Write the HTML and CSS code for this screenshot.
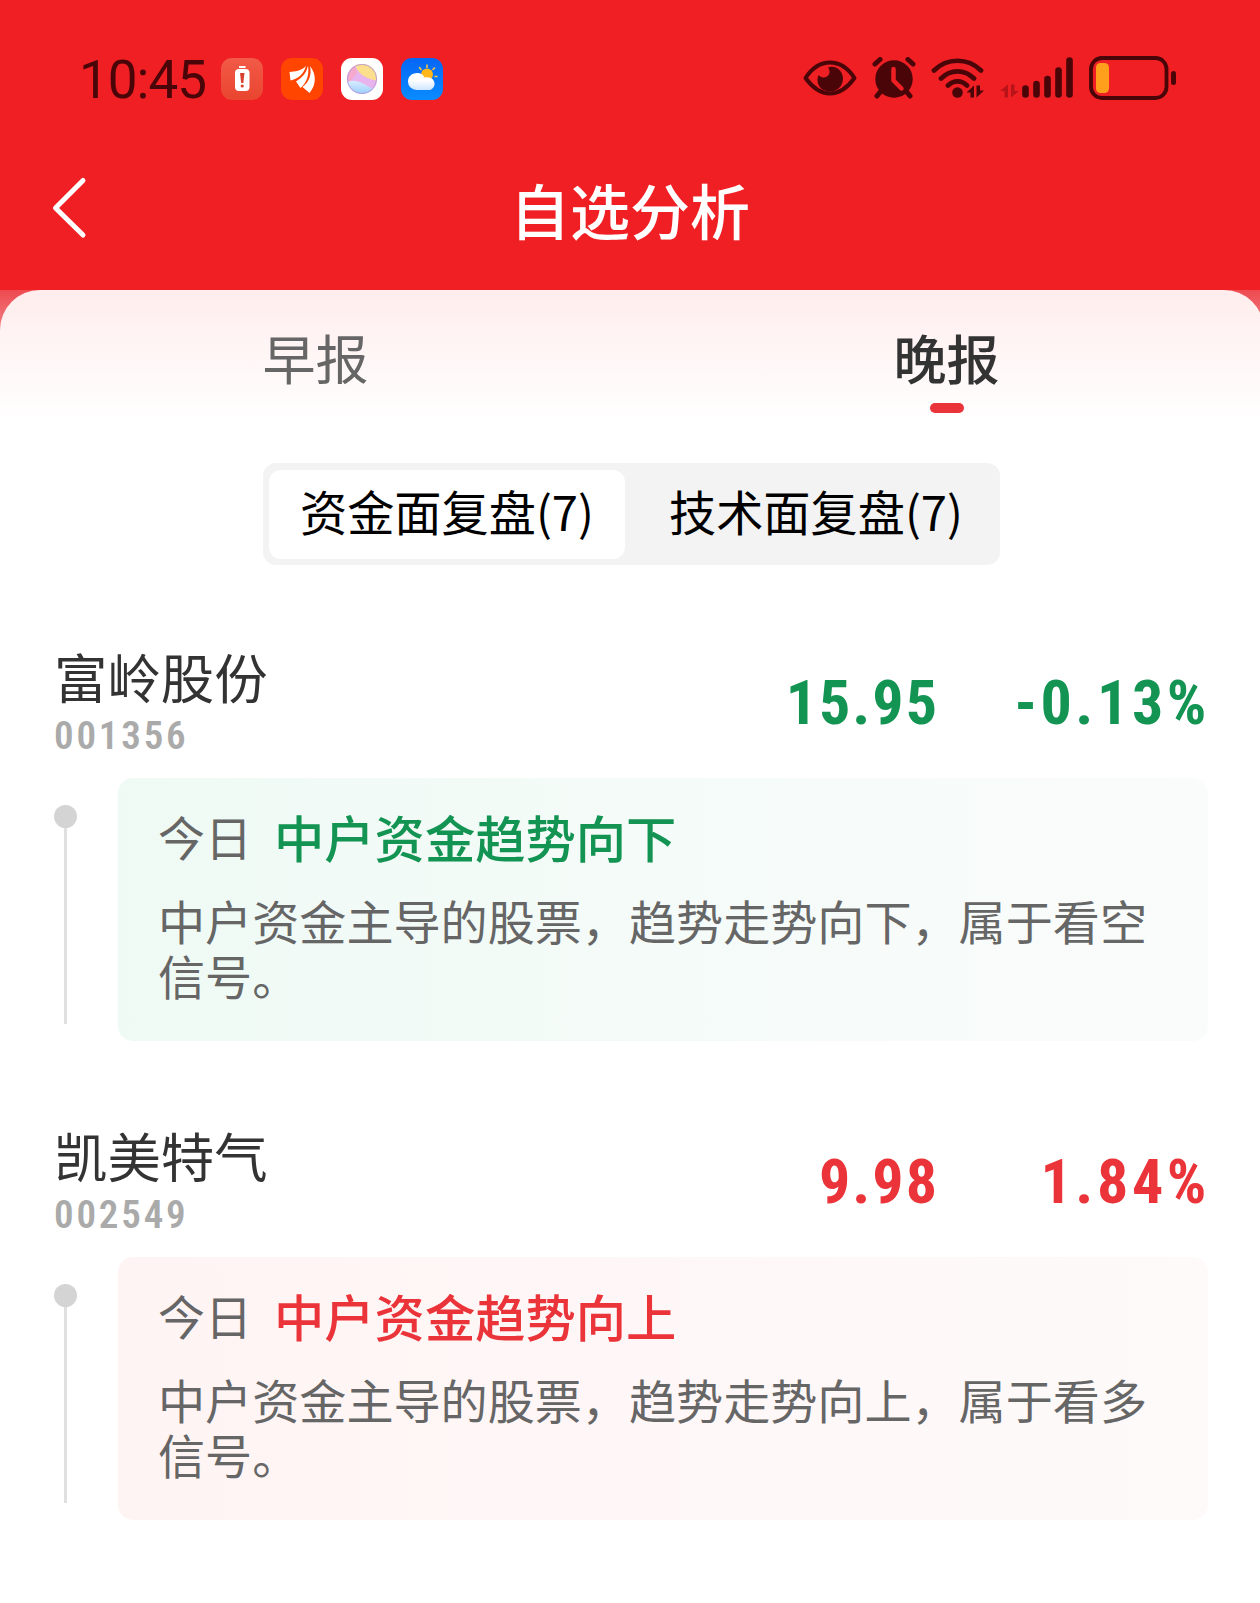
FILE: index.html
```html
<!DOCTYPE html>
<html lang="zh-CN">
<head>
    <meta charset="UTF-8">
    <meta name="viewport" content="width=device-width, initial-scale=1.0">
    <title>自选分析</title>
    <link rel="stylesheet" href="styles.css">
</head>
<body>
    <div class="screen">
        <header class="header">
            <div class="status-bar">
                <span class="time">10:45</span>
                <div class="app-icons">
                    <svg width="42" height="42" viewBox="0 0 42 42">
                        <defs>
                            <linearGradient id="alert" x1="0" y1="0" x2="0" y2="1">
                                <stop offset="0" stop-color="#f25a48"/>
                                <stop offset="1" stop-color="#e9452f"/>
                            </linearGradient>
                        </defs>
                        <rect width="42" height="42" rx="11" fill="url(#alert)"/>
                        <rect x="18" y="8" width="6.500" height="2" fill="#fff"/>
                        <rect x="14" y="11" width="14.500" height="22" rx="4" fill="#fff"/>
                        <path d="M19 15h4.500l-1.200 10h-2.100z" fill="#d8402f"/>
                        <circle cx="21.200" cy="28" r="1.600" fill="#d8402f"/>
                    </svg>
                    <svg width="42" height="42" viewBox="0 0 42 42">
                        <rect width="42" height="42" rx="11" fill="#ff4500"/>
                        <path d="M25 8C20 13 14 13.500 8.500 14l1 8.500c7-1.500 13-6 15.500-14.500z" fill="#fff"/>
                        <path d="M27 7.500c-1.500 8-6 12-12 16l4.500 6.500c6-5 9-13 7.500-22.500z" fill="#fff"/>
                        <path d="M29 8c2 9-1 16-7.500 21l7 6c7-8 7-19 .5-27z" fill="#fff"/>
                    </svg>
                    <svg width="42" height="42" viewBox="0 0 42 42">
                        <defs>
                            <clipPath id="ball"><circle cx="21" cy="21" r="15"/></clipPath>
                            <linearGradient id="ballBlue" x1="0" y1="0" x2="0" y2="1">
                                <stop offset="0" stop-color="#d9ecff"/>
                                <stop offset="1" stop-color="#8cc8f8"/>
                            </linearGradient>
                        </defs>
                        <rect width="42" height="42" rx="11" fill="#fff"/>
                        <g clip-path="url(#ball)">
                            <rect width="42" height="42" fill="#e8b4ee"/>
                            <path d="M14 6c2 9 10 15 24 17V4z" fill="#fbdf8c"/>
                            <path d="M4 8h10l2 7-9 11z" fill="#f5a9cc"/>
                            <path d="M5 24c10-4 18 2 27 7l-8 8H5z" fill="url(#ballBlue)"/>
                        </g>
                        <circle cx="21" cy="21" r="14.600" fill="none" stroke="#b394d8" stroke-width="0.800"/>
                    </svg>
                    <svg width="42" height="42" viewBox="0 0 42 42">
                        <defs>
                            <linearGradient id="sky" x1="0" y1="0" x2="0" y2="1">
                                <stop offset="0" stop-color="#0566f5"/>
                                <stop offset="1" stop-color="#0a8cff"/>
                            </linearGradient>
                            <linearGradient id="cloud" x1="0" y1="0" x2="0" y2="1">
                                <stop offset="0.400" stop-color="#fff"/>
                                <stop offset="1" stop-color="#cfe6ff"/>
                            </linearGradient>
                        </defs>
                        <rect width="42" height="42" rx="11" fill="url(#sky)"/>
                        <path d="M26 7v2.500M18.500 9.500l1.500 2M33.500 10l-1.500 1.500M34 18.500h2M31.500 24.500l1 1" stroke="#ffc93c" stroke-width="1.500" stroke-linecap="round"/>
                        <circle cx="26" cy="16.500" r="6" fill="#ffb71a"/>
                        <path d="M15.500 32a8.500 8.500 0 0 1-8.500-8.500c0-5 4-8.500 9-8.500 4 0 6.500 2 7.500 4.500 6-1.500 10.500 2 10 7-.5 3.500-3 5.500-6 5.500z" fill="url(#cloud)"/>
                    </svg>
                </div>
                <div class="system-icons">
                    <svg class="eye" width="54" height="38" viewBox="0 0 54 38">
                        <path d="M2.500 19C9 9 18 3.500 27 3.500S45 9 51.500 19C45 28 36 34.500 27 34.500S9 28 2.500 19z" fill="none" stroke="#4a0508" stroke-width="4" stroke-linejoin="round"/>
                        <path d="M25 8.500c6-3 15 2 15 11 0 7-5.500 13-13 13s-12.500-5-12.500-11.500c0-2 .5-3.500 1-5 2 2.500 6 3.500 8.500 1.500 3-2 3.500-6 1-9z" fill="#4a0508"/>
                    </svg>
                    <svg class="alarm" width="44" height="42" viewBox="0 0 44 42">
                        <path d="M3 7l5-4.500M41 7l-5-4.500" stroke="#4a0508" stroke-width="5" stroke-linecap="round"/>
                        <path d="M9 34l-4 5M34 34l4 5" stroke="#4a0508" stroke-width="5" stroke-linecap="round"/>
                        <circle cx="22" cy="22" r="18.700" fill="#4a0508"/>
                        <path d="M21.500 12v11.500l8 8" fill="none" stroke="#f01f24" stroke-width="4.500" stroke-linecap="round" stroke-linejoin="round"/>
                    </svg>
                    <svg class="wifi" width="54" height="42" viewBox="0 0 54 42">
                        <path d="M3 13.500c13-13 34-13 47 0M10 21.500c9.500-9.500 23.500-9.500 33 0M17 28.500c5.500-5.500 13.500-5.500 19 0" fill="none" stroke="#4a0508" stroke-width="4.700" stroke-linecap="round"/>
                        <circle cx="26.500" cy="35.500" r="5.300" fill="#4a0508"/>
                        <path d="M43 28.500v12h-3.500v-5h-4zM45.500 40.500v-12H49v5h4z" fill="#4a0508"/>
                    </svg>
                    <svg class="signal" width="74" height="42" viewBox="0 0 74 42">
                        <path d="M8 27.500v13H4.500V34H0zM11 40.500v-13h3.500V34H19z" fill="#b81319"/>
                        <path d="M25.500 31.500v6M36.500 27v10.500M47.500 22v15.500M58.500 13.500v24M69.500 3.500v34" stroke="#4a0508" stroke-width="6.600" stroke-linecap="round"/>
                    </svg>
                    <svg class="battery" width="88" height="46" viewBox="0 0 88 46">
                        <rect x="2" y="3" width="75.500" height="40" rx="11" fill="none" stroke="#4a0508" stroke-width="3.800"/>
                        <rect x="7" y="8" width="13" height="30" rx="4.500" fill="#ff9f1c"/>
                        <rect x="82" y="16" width="5" height="14" rx="2.500" fill="#4a0508"/>
                    </svg>
                </div>
            </div>
            <div class="nav-bar">
                <svg class="back" width="40" height="64" viewBox="0 0 40 64">
                    <path d="M33 4.500L5.500 32 33 59" fill="none" stroke="#fff" stroke-width="5" stroke-linecap="round" stroke-linejoin="round"/>
                </svg>
                <h1 class="title">自选分析</h1>
            </div>
        </header>

        <main class="panel-wrap">
            <div class="panel">
                <nav class="tabs">
                    <a class="tab">早报</a>
                    <a class="tab active">晚报</a>
                </nav>

                <div class="segment">
                    <span class="segment-item selected">资金面复盘(7)</span>
                    <span class="segment-item">技术面复盘(7)</span>
                </div>

                <section class="stock down">
                    <div class="stock-head">
                        <div>
                            <h2 class="name">富岭股份</h2>
                            <p class="code">001356</p>
                        </div>
                        <span class="price">15.95</span>
                        <span class="change">-0.13%</span>
                    </div>
                    <div class="stock-body">
                        <div class="timeline"><i class="dot"></i><i class="line"></i></div>
                        <div class="card">
                            <p class="card-title"><span class="day">今日</span><strong class="trend">中户资金趋势向下</strong></p>
                            <p class="desc">中户资金主导的股票，趋势走势向下，属于看空信号。</p>
                        </div>
                    </div>
                </section>

                <section class="stock up">
                    <div class="stock-head">
                        <div>
                            <h2 class="name">凯美特气</h2>
                            <p class="code">002549</p>
                        </div>
                        <span class="price">9.98</span>
                        <span class="change">1.84%</span>
                    </div>
                    <div class="stock-body">
                        <div class="timeline"><i class="dot"></i><i class="line"></i></div>
                        <div class="card">
                            <p class="card-title"><span class="day">今日</span><strong class="trend">中户资金趋势向上</strong></p>
                            <p class="desc">中户资金主导的股票，趋势走势向上，属于看多信号。</p>
                        </div>
                    </div>
                </section>
            </div>
        </main>
    </div>
</body>
</html>
```

FILE: styles.css
```css
* {
    box-sizing: border-box;
    margin: 0;
    padding: 0;
}

body {
    background-color: #fff;
    font-family: "Noto Sans CJK SC", sans-serif;
    color: #333;
}

svg {
    display: block;
    flex-shrink: 0;
}

.screen {
    width: 1260px;
    height: 1603px;
    overflow: hidden;
}

/* Header */
.header {
    height: 290px;
    background-color: #f01f24;
}

.status-bar {
    display: flex;
    align-items: center;
    height: 158px;
    padding: 0 83px 0 79px;
}

.time {
    width: 142px;
    padding-top: 2px;
    font-family: Roboto, sans-serif;
    font-size: 53px;
    font-weight: 450;
    line-height: 60px;
    letter-spacing: -1px;
    color: #4a0508;
}

.app-icons {
    display: flex;
    gap: 18px;
}

.system-icons {
    display: flex;
    align-items: center;
    margin-left: auto;
    padding-bottom: 2px;
}

.alarm,
.wifi,
.signal,
.battery {
    margin-left: 15px;
}

.nav-bar {
    display: grid;
    grid-template-columns: 100px 1fr 100px;
    align-items: center;
    height: 100px;
    padding: 0 50px;
}

.title {
    padding-top: 1px;
    font-size: 60px;
    font-weight: 500;
    line-height: 80px;
    text-align: center;
    color: #fff;
}

/* Panel */
.panel-wrap {
    background: linear-gradient(#ee4a50, #f08286 40px, #fff 41px);
}

.panel {
    width: 1264px;
    height: 1313px;
    border-radius: 40px 40px 0 0;
    background: linear-gradient(#ffeded, #fff 135px);
}

.tabs {
    display: grid;
    grid-template-columns: 1fr 1fr;
    width: 1262px;
    padding-top: 37px;
}

.tab {
    display: flex;
    flex-direction: column;
    align-items: center;
    font-size: 53px;
    line-height: 60px;
    color: #666;
}

.tab.active {
    font-weight: 500;
    color: #333;
}

.tab::after {
    content: "";
    width: 34px;
    height: 10px;
    margin-top: 16px;
    border-radius: 5px;
}

.tab.active::after {
    background-color: #ea3439;
}

.segment {
    display: flex;
    justify-content: space-between;
    width: 737px;
    height: 102px;
    margin: 50px 0 79px 263px;
    padding: 7px 6px 6px;
    border-radius: 13px;
    background-color: #f3f3f3;
}

.segment-item {
    width: 356px;
    border-radius: 12px;
    font-size: 47.2px;
    line-height: 81px;
    text-align: center;
    color: #000;
}

.segment-item.selected {
    background-color: #fff;
}

/* Stocks */
.stock {
    width: 1208px;
    margin-bottom: 82px;
    padding-left: 54px;
}

.stock-head {
    display: grid;
    grid-template-columns: 1fr auto 269px;
    align-items: center;
    height: 111px;
}

.name {
    padding-top: 2px;
    font-size: 53.4px;
    font-weight: 400;
    line-height: 60px;
}

.code {
    margin-top: 10px;
    font-family: Roboto, sans-serif;
    font-size: 39px;
    font-weight: 600;
    font-stretch: 85%;
    line-height: 40px;
    letter-spacing: 2.8px;
    color: #aaa;
}

.price,
.change {
    padding-top: 6px;
    font-family: Roboto, sans-serif;
    font-size: 62px;
    font-weight: 700;
    font-stretch: 85%;
    line-height: 70px;
    letter-spacing: 2px;
    text-align: right;
}

.change {
    margin-right: -2px;
    letter-spacing: 3.6px;
}

.down .price,
.down .change,
.down .trend {
    color: #149453;
}

.up .price,
.up .change,
.up .trend {
    color: #ea3439;
}

.stock-body {
    display: flex;
    height: 263px;
    margin-top: 23px;
}

.timeline {
    display: flex;
    flex-direction: column;
    align-items: center;
    width: 23px;
    margin-right: 41px;
    padding: 27px 0 17px;
}

.dot {
    width: 23px;
    height: 23px;
    border-radius: 50%;
    background-color: #d4d4d4;
}

.line {
    flex: 1;
    width: 3px;
    background-color: #e0e0e0;
}

.card {
    flex: 1;
    padding: 28px 40px 0;
    border-radius: 15px;
}

.down .card {
    background: linear-gradient(90deg, #effaf5, #fafcfb);
}

.up .card {
    background: linear-gradient(90deg, #fff4f4, #fefafa);
}

.card-title {
    display: flex;
    gap: 22px;
    line-height: 60px;
}

.day {
    font-size: 47px;
    color: #666;
}

.trend {
    font-size: 50.3px;
    font-weight: 500;
}

.desc {
    margin-top: 26px;
    font-size: 47.1px;
    line-height: 55px;
    color: #666;
}
```
